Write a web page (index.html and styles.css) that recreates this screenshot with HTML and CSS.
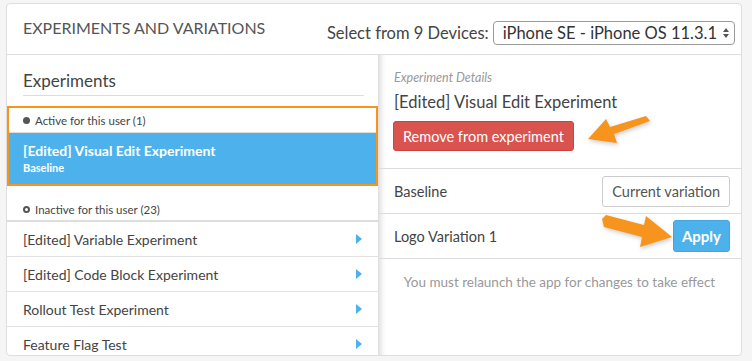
FILE: index.html
```html
<!DOCTYPE html>
<html lang="en">
<head>
  <meta charset="UTF-8" />
  <title>Experiments and Variations</title>
  <link rel="stylesheet" href="styles.css">
</head>
<body>

  <div class="panel">
    <div class="panel-head">
      <h1>Experiments and Variations</h1>
      <label class="device-pick">
        Select from 9 Devices:
        <span class="select">iPhone SE - iPhone OS 11.3.1
          <svg width="8" height="12" viewBox="0 0 8 12"><path d="M4 1 L7 5 H1 Z M4 11 L7 7 H1 Z" fill="#555"/></svg>
        </span>
      </label>
    </div>

    <div class="panel-body">
      <!-- Experiment list -->
      <div class="list">
        <h2>Experiments</h2>

        <div class="active-box">
          <div class="group-label"><span class="dot"></span>Active for this user (1)</div>
          <div class="item selected">
            <div class="item-title">[Edited] Visual Edit Experiment</div>
            <div class="item-sub">Baseline</div>
          </div>
        </div>

        <div class="group-label inactive"><span class="dot ring"></span>Inactive for this user (23)</div>
        <div class="row">[Edited] Variable Experiment<span class="caret"></span></div>
        <div class="row">[Edited] Code Block Experiment<span class="caret"></span></div>
        <div class="row">Rollout Test Experiment<span class="caret"></span></div>
        <div class="row">Feature Flag Test<span class="caret"></span></div>
      </div>

      <!-- Details -->
      <div class="details">
        <div class="details-top">
          <div class="muted">Experiment Details</div>
          <h3>[Edited] Visual Edit Experiment</h3>
          <button class="btn btn-red">Remove from experiment</button>
        </div>
        <div class="var-row">
          <span>Baseline</span>
          <button class="btn btn-plain">Current variation</button>
        </div>
        <div class="var-row">
          <span>Logo Variation 1</span>
          <button class="btn btn-blue">Apply</button>
        </div>
        <p class="note">You must relaunch the app for changes to take effect</p>

        <!-- annotation arrows -->
        <svg class="arrow arrow-1" width="66" height="34" viewBox="0 0 66 34">
          <path d="M60 3 L64 8 L28 21 L31 30 L2 26 L20 6 L24 14 Z" fill="#f7941d"/>
        </svg>
        <svg class="arrow arrow-2" width="74" height="34" viewBox="0 0 74 34">
          <path d="M2 4 L6 0 L44 10 L46 1 L72 22 L40 32 L42 22 L4 12 Z" fill="#f7941d"/>
        </svg>
      </div>
    </div>
  </div>

</body>
</html>
```

FILE: styles.css
```css
/* Base */
* { margin: 0; padding: 0; box-sizing: border-box; }
body {
  font-family: 'Lato', 'Open Sans', sans-serif;
  background: #f5f5f5;
  color: #444;
  padding: 3px 10px 0 6px;
}

/* Panel */
.panel {
  width: 736px;
  height: 353px;
  background: #fff;
  border: 1px solid #dedede;
  border-radius: 4px;
  overflow: hidden;
  display: flex;
  flex-direction: column;
}
.panel-head {
  height: 51px;
  flex: none;
  display: flex;
  align-items: center;
  justify-content: space-between;
  padding: 0 6px 0 16px;
  border-bottom: 1px solid #dedede;
}
.panel-head h1 {
  font-size: 16px;
  font-weight: 400;
  text-transform: uppercase;
  color: #555;
  margin-top: -3px;
}
.device-pick {
  display: flex;
  align-items: center;
  gap: 4px;
  font-size: 16.5px;
  color: #444;
  margin-top: 7px;
}
.select {
  display: flex;
  align-items: center;
  gap: 5px;
  height: 24px;
  padding: 0 4px 0 9px;
  border: 1px solid #999;
  border-radius: 4px;
  font-size: 16.5px;
  color: #333;
}

.panel-body {
  flex: 1;
  display: flex;
  min-height: 0;
}

/* Left list */
.list {
  width: 371px;
  flex: none;
}
.list h2 {
  font-size: 17px;
  font-weight: 400;
  color: #444;
  margin: 0 14px 0 16px;
  height: 41px;
  padding-top: 15px;
  border-bottom: 1px solid #ddd;
}
.active-box {
  margin-top: 10px;
  border: 2px solid #f7941d;
}
.group-label {
  font-size: 11.5px;
  color: #444;
  height: 25px;
  padding: 5px 0 0 14px;
  display: flex;
  align-items: center;
  gap: 5px;
}
.active-box .group-label {
  border-bottom: 1px solid #ddd;
  padding-top: 0;
}
.dot {
  width: 7px;
  height: 7px;
  border-radius: 50%;
  background: #555;
}
.dot.ring {
  background: none;
  border: 2px solid #555;
}
.item.selected {
  background: #4db2ec;
  color: #fff;
  padding: 9px 14px 8px;
  height: 51px;
}
.item-title {
  font-size: 14px;
  font-weight: 700;
}
.item-sub {
  font-size: 11px;
  font-weight: 700;
  margin-top: 2px;
}
.group-label.inactive {
  height: 36px;
  padding: 12px 0 0 16px;
  border-bottom: 2px solid #ddd;
}
.row {
  height: 35px;
  display: flex;
  align-items: center;
  justify-content: space-between;
  padding: 0 16px 0 16px;
  font-size: 14px;
  color: #444;
  border-bottom: 1px solid #e2e2e2;
}
.caret {
  width: 0;
  height: 0;
  border-top: 5px solid transparent;
  border-bottom: 5px solid transparent;
  border-left: 6px solid #4db2ec;
}

/* Right details */
.details {
  flex: 1;
  position: relative;
  box-shadow: inset 7px 0 6px -5px rgba(0, 0, 0, 0.18);
}
.details-top {
  padding: 15px 16px 15px 15px;
  border-bottom: 1px solid #ddd;
  height: 114px;
}
.muted {
  font-size: 12.5px;
  font-style: italic;
  color: #999;
  padding-left: 1px;
}
.details h3 {
  font-size: 16.5px;
  font-weight: 400;
  color: #444;
  margin: 7px 0 9px;
  padding-left: 1px;
}
.btn {
  font-family: inherit;
  border-radius: 3px;
  cursor: pointer;
}
.btn-red {
  background: #d9534f;
  border: 1px solid #c9443f;
  color: #fff;
  font-size: 14.5px;
  height: 30px;
  padding: 0 9px;
}
.var-row {
  height: 45px;
  display: flex;
  align-items: center;
  justify-content: space-between;
  padding: 0 11px 0 16px;
  border-bottom: 1px solid #ddd;
  font-size: 14.5px;
  color: #444;
}
.btn-plain {
  background: #fff;
  border: 1px solid #ccc;
  color: #555;
  font-size: 14.5px;
  height: 31px;
  padding: 0 9px;
}
.btn-blue {
  background: #4db2ec;
  border: 1px solid #43a6e0;
  color: #fff;
  font-weight: 700;
  font-size: 15px;
  height: 32px;
  padding: 0 8px;
}
.note {
  text-align: center;
  font-size: 13.5px;
  color: #999;
  margin-top: 15px;
}

/* Annotation arrows */
.arrow {
  position: absolute;
  filter: drop-shadow(1px 2px 2px rgba(0, 0, 0, 0.2));
}
.arrow-1 { left: 208px; top: 58px; }
.arrow-2 { left: 222px; top: 160px; }
```
